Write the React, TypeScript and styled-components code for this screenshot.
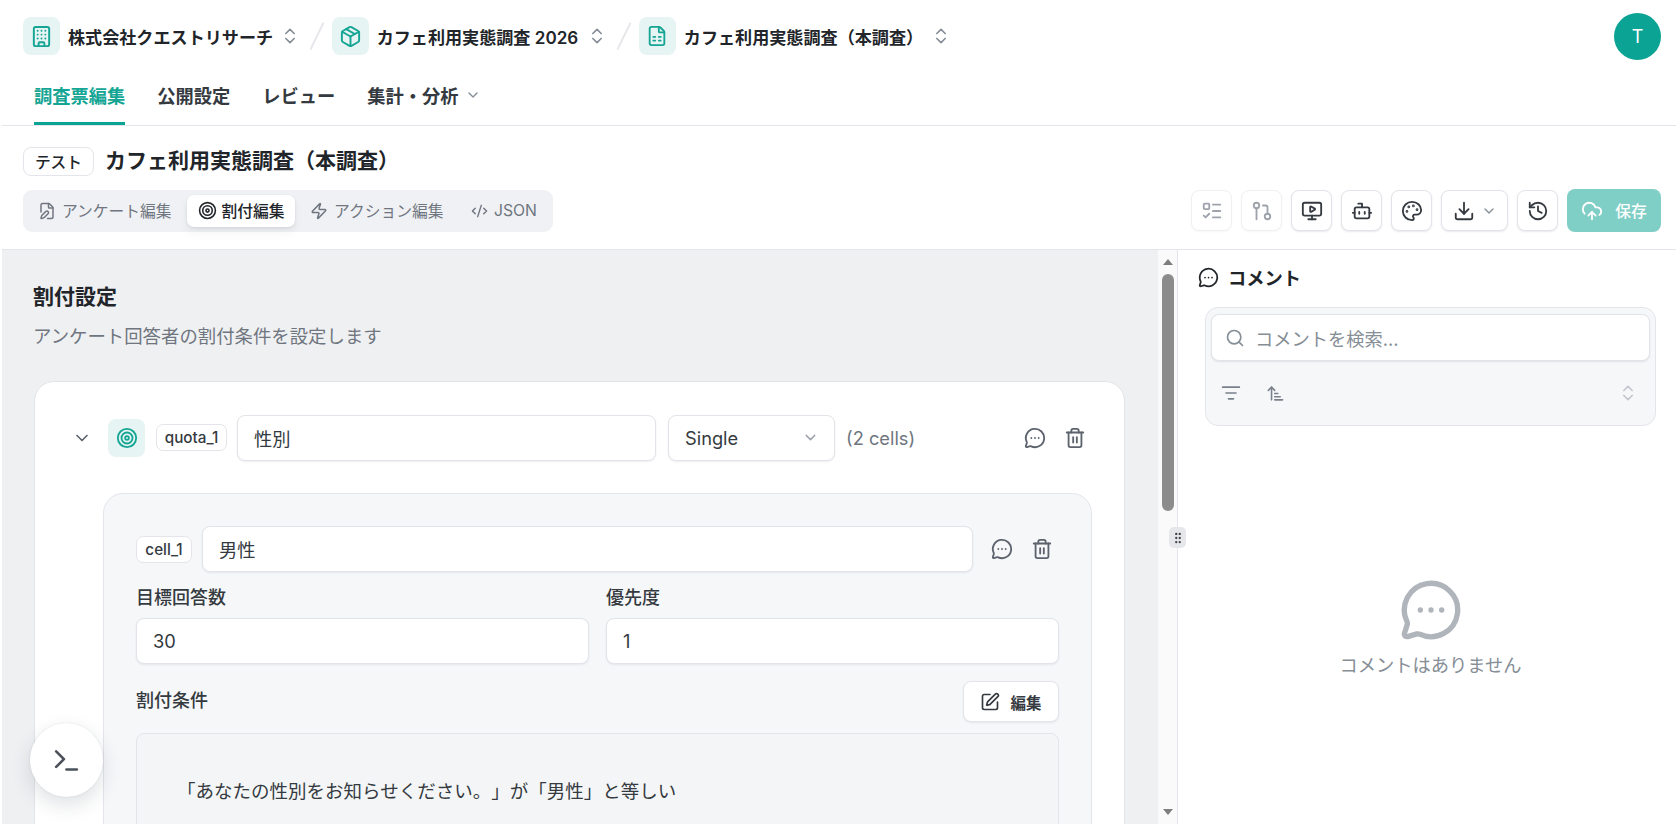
import styled, { createGlobalStyle } from "styled-components";
import {
  ArrowUpNarrowWide,
  Bot,
  Building,
  ChevronDown,
  ChevronsUpDown,
  CloudUpload,
  CodeXml,
  Download,
  FilePen,
  FileSpreadsheet,
  GitPullRequest,
  GripVertical,
  History,
  ListFilter,
  ListTodo,
  MessageCircleMore,
  MonitorPlay,
  Package,
  Palette,
  Search,
  SquarePen,
  Target,
  Terminal,
  Trash2,
  Zap,
} from "lucide-react";

const GlobalStyle = createGlobalStyle`
  html, body {
    margin: 0;
    padding: 0;
    height: 100%;
    overflow: hidden;
    background: #fff;
  }
  body {
    font-family: Inter, "Noto Sans CJK JP", sans-serif;
    color: #212529;
    text-spacing-trim: space-all;
  }
  * { box-sizing: border-box; }
`;

const Page = styled.div`
  position: relative;
  width: 1676px;
  height: 824px;
  display: flex;
  flex-direction: column;
  overflow: hidden;
  padding-left: 2px;
`;

const Header = styled.header`
  height: 126px;
  flex: none;
  border-bottom: 1px solid #e4e5ea;
  padding: 17px 15px 0 21px;
`;

const TopRow = styled.div`
  display: flex;
  align-items: center;
  height: 38px;
`;

const IconBox = styled.div`
  width: 37px;
  height: 38px;
  flex: none;
  border-radius: 8px;
  background: #e6f4f3;
  color: #14a594;
  display: flex;
  align-items: center;
  justify-content: center;
`;

const CrumbText = styled.span<{ $gap: number }>`
  margin-left: 8px;
  margin-right: ${(p) => p.$gap}px;
  font-size: 17.1px;
  font-weight: 600;
  white-space: nowrap;
`;

const CrumbSelector = styled(ChevronsUpDown)`
  color: #868e96;
  flex: none;
`;

const Slash = styled.div`
  width: 1.5px;
  height: 30px;
  margin: 0 14px 0 16px;
  background: #e6e7ea;
  transform: rotate(26deg);
`;

const Avatar = styled.div`
  width: 47px;
  height: 47px;
  margin-left: auto;
  border-radius: 50%;
  background: #0ba394;
  color: #fff;
  font-size: 18px;
  display: flex;
  align-items: center;
  justify-content: center;
`;

const TabRow = styled.nav`
  display: flex;
  height: 51px;
  margin-left: 11px;
  margin-top: 19px;
  gap: 32px;
`;

const Tab = styled.div<{ $active?: boolean }>`
  height: 55px;
  margin-top: -4px;
  display: flex;
  align-items: center;
  gap: 6px;
  font-size: 18.25px;
  font-weight: 600;
  white-space: nowrap;
  color: ${(p) => (p.$active ? "#14a594" : "#343a40")};
  border-bottom: 3px solid ${(p) => (p.$active ? "#0ba394" : "transparent")};
  padding-bottom: 3px;
`;

const SurveyBar = styled.section`
  height: 124px;
  flex: none;
  border-bottom: 1px solid #e4e5ea;
  padding: 21px 15px 0 21px;
`;

const TitleRow = styled.div`
  display: flex;
  align-items: center;
  gap: 11px;
  height: 29px;
`;

const ModeBadge = styled.span`
  width: 71px;
  height: 29px;
  border: 1px solid #e4e5ea;
  border-radius: 8px;
  font-size: 15.75px;
  font-weight: 500;
  display: flex;
  align-items: center;
  justify-content: center;
`;

const Title = styled.h1`
  margin: 0 0 5px;
  font-size: 21px;
  font-weight: 700;
  color: #212529;
`;

const ToolRow = styled.div`
  display: flex;
  align-items: center;
  justify-content: space-between;
  margin-top: 13px;
`;

const Segments = styled.div`
  width: 530px;
  height: 42px;
  padding: 0 5px 0 15px;
  background: #f0f1f4;
  border-radius: 9px;
  display: flex;
  align-items: center;
`;

const Segment = styled.div<{ $active?: boolean; $width: number }>`
  width: ${(p) => p.$width}px;
  height: 32px;
  flex: none;
  border-radius: 7px;
  display: flex;
  align-items: center;
  gap: ${(p) => (p.$active ? 5 : 6)}px;
  white-space: nowrap;
  font-size: 15.75px;
  font-weight: ${(p) => (p.$active ? 500 : 400)};
  color: ${(p) => (p.$active ? "#212529" : "#6f7680")};
  background: ${(p) => (p.$active ? "#fff" : "transparent")};
  box-shadow: ${(p) => (p.$active ? "0 1px 3px rgba(30,40,60,.1), 0 6px 10px rgba(30,40,60,.05)" : "none")};
  justify-content: ${(p) => (p.$active ? "center" : "flex-start")};
`;

const SegmentGap = styled.div<{ $width: number }>`
  width: ${(p) => p.$width}px;
  flex: none;
`;

const Tools = styled.div`
  display: flex;
  align-items: center;
  gap: 9px;
`;

const ToolButton = styled.div<{ $muted?: boolean; $wide?: boolean }>`
  width: ${(p) => (p.$wide ? 67 : 41)}px;
  height: 41px;
  background: #fff;
  border: 1px solid ${(p) => (p.$muted ? "#eff0f3" : "#e3e4ea")};
  border-radius: 8px;
  box-shadow: ${(p) => (p.$muted ? "0 1px 2px rgba(30,40,60,.04)" : "0 1px 2px rgba(30,40,60,.1)")};
  color: ${(p) => (p.$muted ? "#9ea3ab" : "#343a40")};
  display: flex;
  align-items: center;
  justify-content: center;
  gap: 6px;
`;

const SaveButton = styled.div`
  width: 94px;
  height: 43px;
  background: #80cfc6;
  color: #fff;
  border-radius: 8px;
  display: flex;
  align-items: center;
  justify-content: center;
  gap: 12px;
  font-size: 15.75px;
  font-weight: 500;
`;

const Body = styled.div`
  flex: 1;
  min-height: 0;
  display: flex;
`;

const Editor = styled.main`
  width: 1156px;
  flex: none;
  background: #eff0f2;
  overflow: hidden;
  padding: 34px 33px 0 31px;
`;

const SectionTitle = styled.h2`
  margin: 0;
  font-size: 21px;
  line-height: 26px;
  font-weight: 600;
  color: #212529;
`;

const SectionNote = styled.p`
  margin: 13px 0 0;
  font-size: 18.4px;
  line-height: 26px;
  color: #6f7680;
`;

const QuotaCard = styled.div`
  margin: 32px 0 0 1px;
  background: #fff;
  border: 1px solid #e4e5ea;
  border-radius: 20px;
  padding: 32px 33px 0 33px;
  height: 600px;
`;

const QuotaHead = styled.div`
  display: flex;
  align-items: center;
  height: 47px;
  color: #5c636d;
`;

const Collapse = styled(ChevronDown)`
  margin: 0 0 0 4px;
  flex: none;
`;

const TargetBox = styled(IconBox)`
  margin-left: 16px;
`;

const KeyBadge = styled.span<{ $width: number; $left: number }>`
  width: ${(p) => p.$width}px;
  margin-left: ${(p) => p.$left}px;
  height: 27px;
  flex: none;
  background: #fff;
  border: 1px solid #e4e5ea;
  border-radius: 7px;
  font-size: 15.25px;
  font-weight: 500;
  color: #343a40;
  display: flex;
  align-items: center;
  justify-content: center;
`;

const Field = styled.div<{ $width?: number; $left?: number }>`
  ${(p) => (p.$width ? `width: ${p.$width}px; flex: none;` : "flex: 1;")}
  margin-left: ${(p) => p.$left ?? 0}px;
  height: 46px;
  background: #fff;
  border: 1px solid #e3e4ea;
  border-radius: 8px;
  box-shadow: 0 1px 2px rgba(30, 40, 60, 0.08);
  padding: 0 15px 0 16px;
  font-size: 18.25px;
  color: #343a40;
  display: flex;
  align-items: center;
  justify-content: space-between;
`;

const CellCount = styled.span`
  margin-left: 11px;
  font-size: 18.25px;
  color: #6f7680;
`;

const RowActions = styled.div<{ $left: number }>`
  display: flex;
  align-items: center;
  gap: 18px;
  margin-left: ${(p) => p.$left}px;
  color: #5c636d;
`;

const CellCard = styled.div`
  margin: 32px 0 0 35px;
  width: 989px;
  background: #f6f7f9;
  border: 1px solid #e4e5ea;
  border-radius: 20px;
  padding: 32px 32px 0 32px;
  height: 420px;
`;

const CellHead = styled.div`
  display: flex;
  align-items: center;
  height: 46px;
`;

const FieldGrid = styled.div`
  display: grid;
  grid-template-columns: 453px 453px;
  column-gap: 17px;
  margin-top: 13px;
`;

const FieldLabel = styled.label`
  display: block;
  font-size: 18px;
  line-height: 26px;
  font-weight: 500;
  color: #343a40;
  margin-bottom: 7px;
`;

const ConditionHead = styled.div`
  display: flex;
  align-items: center;
  justify-content: space-between;
  height: 41px;
  margin-top: 17px;
`;

const ConditionLabel = styled(FieldLabel)`
  margin: 0 0 2px;
`;

const EditButton = styled.div`
  width: 96px;
  height: 41px;
  background: #fff;
  border: 1px solid #e4e5ea;
  border-radius: 8px;
  box-shadow: 0 1px 2px rgba(30, 40, 60, 0.08);
  display: flex;
  align-items: center;
  justify-content: center;
  gap: 10px;
  font-size: 15.5px;
  font-weight: 600;
  color: #343a40;
`;

const ConditionBox = styled.div`
  margin-top: 11px;
  height: 150px;
  width: 923px;
  background: #f4f5f7;
  border: 1px solid #e4e5ea;
  border-radius: 8px;
  padding: 44px 0 0 40px;
  font-size: 18.5px;
  line-height: 26px;
  color: #343a40;
`;

const ScrollRail = styled.div`
  width: 19px;
  flex: none;
  background: #fafafa;
  display: flex;
  flex-direction: column;
  align-items: center;
`;

const RailArrow = styled.div<{ $down?: boolean }>`
  width: 0;
  height: 0;
  margin: ${(p) => (p.$down ? "auto 0 9px" : "9px 0 9px")};
  border-left: 5px solid transparent;
  border-right: 5px solid transparent;
  ${(p) => (p.$down ? "border-top: 6px solid #7e7e7e;" : "border-bottom: 6px solid #7e7e7e;")}
`;

const RailThumb = styled.div`
  width: 12px;
  height: 237px;
  background: #8c8c8c;
  border-radius: 6px;
`;

const Comments = styled.aside`
  flex: 1;
  border-left: 1px solid #e4e5ea;
  display: flex;
  flex-direction: column;
  padding: 17px 20px 0 20px;
`;

const CommentsTitle = styled.div`
  display: flex;
  align-items: center;
  gap: 9px;
  height: 20px;
  font-size: 18.25px;
  font-weight: 600;
  color: #212529;
`;

const FilterPanel = styled.div`
  margin: 20px 0 0 7px;
  height: 119px;
  background: #f6f7f9;
  border: 1px solid #e4e5ea;
  border-radius: 13px;
  padding: 6px 5px 0;
`;

const SearchBox = styled.div`
  height: 47px;
  background: #fff;
  border: 1px solid #e3e4ea;
  border-radius: 8px;
  box-shadow: 0 1px 2px rgba(30, 40, 60, 0.1);
  display: flex;
  align-items: center;
  gap: 10px;
  padding-left: 13px;
  font-size: 18.25px;
  color: #868e96;
`;

const FilterRow = styled.div`
  display: flex;
  align-items: center;
  gap: 25px;
  height: 20px;
  margin-top: 22px;
  padding: 0 12px 0 10px;
  color: #7a818b;
`;

const FilterEnd = styled(ChevronsUpDown)`
  margin-left: auto;
  color: #c3c7cd;
`;

const EmptyState = styled.div`
  margin-top: 152px;
  display: flex;
  flex-direction: column;
  align-items: center;
  gap: 10px;
  padding-left: 7px;
  color: #b0b4bb;
`;

const EmptyText = styled.span`
  font-size: 18.25px;
  line-height: 26px;
  color: #868e96;
`;

const ResizeHandle = styled.div`
  position: absolute;
  left: 1169px;
  top: 527px;
  width: 17px;
  height: 21px;
  background: #e6e7ea;
  border-radius: 5px;
  color: #3f454d;
  display: flex;
  align-items: center;
  justify-content: center;
`;

const Fab = styled.div`
  position: absolute;
  left: 30px;
  top: 723px;
  width: 73px;
  height: 74px;
  background: #fff;
  border-radius: 50%;
  box-shadow: 0 0 2px rgba(30, 40, 60, 0.12), 0 8px 20px rgba(30, 40, 60, 0.14);
  color: #4a515b;
  display: flex;
  align-items: center;
  justify-content: center;
`;

const App = () => {
  return (
    <>
      <GlobalStyle />
      <Page>
        <Header>
          <TopRow>
            <IconBox>
              <Building size={23} />
            </IconBox>
            <CrumbText $gap={7}>株式会社クエストリサーチ</CrumbText>
            <CrumbSelector size={20} />
            <Slash />
            <IconBox>
              <Package size={23} />
            </IconBox>
            <CrumbText $gap={9}>カフェ利用実態調査 2026</CrumbText>
            <CrumbSelector size={20} />
            <Slash />
            <IconBox>
              <FileSpreadsheet size={22} />
            </IconBox>
            <CrumbText $gap={8}>カフェ利用実態調査（本調査）</CrumbText>
            <CrumbSelector size={20} />
            <Avatar>T</Avatar>
          </TopRow>
          <TabRow>
            <Tab $active>調査票編集</Tab>
            <Tab>公開設定</Tab>
            <Tab>レビュー</Tab>
            <Tab>
              集計・分析
              <ChevronDown size={16} color="#868e96" />
            </Tab>
          </TabRow>
        </Header>

        <SurveyBar>
          <TitleRow>
            <ModeBadge>テスト</ModeBadge>
            <Title>カフェ利用実態調査（本調査）</Title>
          </TitleRow>
          <ToolRow>
            <Segments>
              <Segment $width={149}>
                <FilePen size={18} />
                アンケート編集
              </Segment>
              <Segment $active $width={108}>
                <Target size={19} />
                割付編集
              </Segment>
              <SegmentGap $width={15} />
              <Segment $width={161}>
                <Zap size={18} />
                アクション編集
              </Segment>
              <Segment $width={66}>
                <CodeXml size={18} />
                JSON
              </Segment>
            </Segments>
            <Tools>
              <ToolButton $muted>
                <ListTodo size={22} />
              </ToolButton>
              <ToolButton $muted>
                <GitPullRequest size={22} />
              </ToolButton>
              <ToolButton>
                <MonitorPlay size={22} />
              </ToolButton>
              <ToolButton>
                <Bot size={22} />
              </ToolButton>
              <ToolButton>
                <Palette size={22} />
              </ToolButton>
              <ToolButton $wide>
                <Download size={22} />
                <ChevronDown size={16} color="#868e96" />
              </ToolButton>
              <ToolButton>
                <History size={22} />
              </ToolButton>
              <SaveButton>
                <CloudUpload size={22} />
                保存
              </SaveButton>
            </Tools>
          </ToolRow>
        </SurveyBar>

        <Body>
          <Editor>
            <SectionTitle>割付設定</SectionTitle>
            <SectionNote>アンケート回答者の割付条件を設定します</SectionNote>
            <QuotaCard>
              <QuotaHead>
                <Collapse size={20} />
                <TargetBox>
                  <Target size={22} />
                </TargetBox>
                <KeyBadge $width={71} $left={11}>
                  quota_1
                </KeyBadge>
                <Field $width={419} $left={10}>
                  性別
                </Field>
                <Field $width={167} $left={12}>
                  Single
                  <ChevronDown size={17} color="#9ea3ab" />
                </Field>
                <CellCount>(2 cells)</CellCount>
                <RowActions $left={109}>
                  <MessageCircleMore size={22} />
                  <Trash2 size={22} />
                </RowActions>
              </QuotaHead>
              <CellCard>
                <CellHead>
                  <KeyBadge $width={56} $left={0}>
                    cell_1
                  </KeyBadge>
                  <Field $width={771} $left={10}>
                    男性
                  </Field>
                  <RowActions $left={18}>
                    <MessageCircleMore size={22} />
                    <Trash2 size={22} />
                  </RowActions>
                </CellHead>
                <FieldGrid>
                  <div>
                    <FieldLabel>目標回答数</FieldLabel>
                    <Field>30</Field>
                  </div>
                  <div>
                    <FieldLabel>優先度</FieldLabel>
                    <Field>1</Field>
                  </div>
                </FieldGrid>
                <ConditionHead>
                  <ConditionLabel>割付条件</ConditionLabel>
                  <EditButton>
                    <SquarePen size={20} />
                    編集
                  </EditButton>
                </ConditionHead>
                <ConditionBox>「あなたの性別をお知らせください。」が「男性」と等しい</ConditionBox>
              </CellCard>
            </QuotaCard>
          </Editor>
          <ScrollRail>
            <RailArrow />
            <RailThumb />
            <RailArrow $down />
          </ScrollRail>
          <Comments>
            <CommentsTitle>
              <MessageCircleMore size={21} />
              コメント
            </CommentsTitle>
            <FilterPanel>
              <SearchBox>
                <Search size={20} />
                コメントを検索...
              </SearchBox>
              <FilterRow>
                <ListFilter size={20} />
                <ArrowUpNarrowWide size={19} />
                <FilterEnd size={20} />
              </FilterRow>
            </FilterPanel>
            <EmptyState>
              <MessageCircleMore size={64} strokeWidth={2} />
              <EmptyText>コメントはありません</EmptyText>
            </EmptyState>
          </Comments>
        </Body>

        <ResizeHandle>
          <GripVertical size={14} />
        </ResizeHandle>
        <Fab>
          <Terminal size={31} />
        </Fab>
      </Page>
    </>
  );
};

export default App;
